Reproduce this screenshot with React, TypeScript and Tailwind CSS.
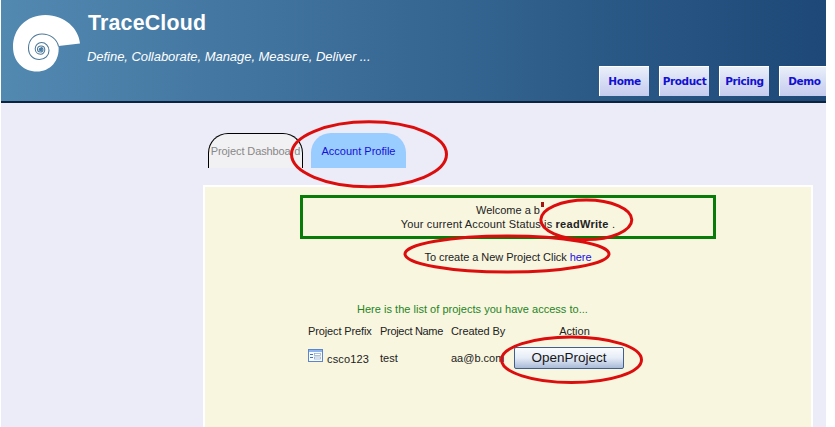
import React from "react";

function ShellLogo() {
  return (
    <svg width="72" height="62" viewBox="10 12 72 62" className="block" fill="none">
      <path
        d="M80 43.5C79 29 65 15 45.5 15C26 15 13 29 13 47C13 61 23 71.5 37 71.5C50 71.5 60 61 58.5 46Z"
        fill="#fff"
      />
      <path
        d="M58.5 46.5C57 39 50 34 42 34C34 34 28.5 40 28.5 48C28.5 55 33 59.5 39.5 59.5C45 59.5 49 55.5 49 50.5C49 46 45.5 42.5 41.5 42.5C38 42.5 35.2 45.5 35.2 48.8C35.2 52 37.5 54.2 40.5 54.2C43 54.2 44.8 52 44.8 49.8C44.8 47.5 43 46 41 46C39 46 37.5 47.5 37.5 49.3C37.5 51 39 52 40.5 52C42 52 43 51 43 49.7C43 48.5 42 47.6 40.9 47.6"
        stroke="#4b7798"
        strokeWidth="1.05"
      />
      <circle cx="40.6" cy="49.4" r="1.8" fill="#467fa9" />
    </svg>
  );
}

function NavButton({ children }: { children: React.ReactNode }) {
  return (
    <a className="flex h-[30px] w-[50px] shrink-0 items-center justify-center border-l border-t border-white bg-gradient-to-b from-[#e9eff9] to-[#c5cbee] pb-px font-['DejaVu_Sans',sans-serif] text-[10.5px] font-bold tracking-[-0.4px] text-[#1210d2]">
      {children}
    </a>
  );
}

function FormIcon() {
  return (
    <svg width="15" height="13" viewBox="0 0 15 13" className="block">
      <rect x=".5" y=".5" width="14" height="12" fill="#f7fbff" stroke="#5c86c5" />
      <rect x="1" y="1" width="13" height="2" fill="#8db4ee" />
      <path d="M2 5.5h3M2 8.5h3" stroke="#4474b4" />
      <rect x="6.5" y="4.5" width="6" height="2" fill="#fff" stroke="#8ba5c7" strokeWidth=".7" />
      <rect x="6.5" y="8" width="6" height="2" fill="#fff" stroke="#8ba5c7" strokeWidth=".7" />
    </svg>
  );
}

export default function App() {
  return (
    <div className="relative h-[427px] w-[835px] overflow-hidden bg-white pl-px font-['Liberation_Sans',Arial,sans-serif] text-[11px] leading-[14px] text-[#222]">
      <div className="h-full w-[825px] overflow-hidden bg-[#ecebf8]">
        <header className="flex h-[103px] border-b-2 border-[#0c2340] bg-gradient-to-r from-[#5289b1] to-[#1d4877] pl-[9px]">
          <div className="shrink-0 pt-3">
            <ShellLogo />
          </div>
          <div className="ml-[5px] w-[300px] shrink-0 whitespace-nowrap pt-[11px] text-white">
            <h1 className="pl-px text-[21.33px] font-bold leading-6 tracking-[0.2px]">TraceCloud</h1>
            <p className="mt-[14px] text-[13px] italic leading-4 tracking-[-0.04px]">
              Define, Collaborate, Manage, Measure, Deliver ...
            </p>
          </div>
          <nav className="ml-[212px] flex shrink-0 gap-[10px] pt-[66px]">
            <NavButton>Home</NavButton>
            <NavButton>Product</NavButton>
            <NavButton>Pricing</NavButton>
            <NavButton>Demo</NavButton>
          </nav>
        </header>

        <div className="ml-[207px] mt-[30px] flex gap-2 whitespace-nowrap">
          <div className="flex h-[35px] w-[95px] items-center justify-center rounded-t-[20px] border border-b-0 border-black bg-[#f1f1f3] tracking-[-0.1px] text-[#888]">
            Project Dashboard
          </div>
          <div className="flex h-[35px] w-[95px] items-center justify-center rounded-t-[20px] bg-[#99ccff] text-[#1710d5]">
            Account Profile
          </div>
        </div>

        <main className="ml-[202px] mt-[17px] h-[260px] w-[610px] border-2 border-white bg-[#f8f6df] pt-2">
          <div className="ml-[95px] h-[44px] w-[416px] border-[3px] border-[#087c08] pt-[5px] text-center">
            <p>Welcome a b</p>
            <p className="tracking-[0.15px]">
              Your current Account Status is <b className="tracking-[0.3px]">readWrite</b> .
            </p>
          </div>
          <p className="ml-[95px] mt-[11px] w-[416px] text-center tracking-[-0.05px]">
            To create a New Project Click <a className="text-[#1710e0]">here</a>
          </p>
          <p className="ml-[152px] mt-[38px] tracking-[0.02px] text-[#258425]">
            Here is the list of projects you have access to...
          </p>
          <div className="ml-[103px] mt-2 grid grid-cols-[72px_71px_63px_110px] whitespace-nowrap">
            <span className="tracking-[-0.12px]">Project Prefix</span>
            <span className="tracking-[-0.3px]">Project Name</span>
            <span className="tracking-[-0.1px]">Created By</span>
            <span className="pl-[11px] text-center">Action</span>
          </div>
          <div className="ml-[103px] mt-[9px] grid grid-cols-[72px_71px_63px_110px] whitespace-nowrap">
            <span className="flex gap-[4px] pt-[2px]">
              <FormIcon />
              <span className="pt-[3px] tracking-[0.15px]">csco123</span>
            </span>
            <span className="pt-[4px]">test</span>
            <span className="pt-[4px]">aa@b.com</span>
            <button className="flex h-[22px] w-[110px] items-center justify-center rounded-[2px] border border-[#425f8b] bg-gradient-to-b from-[#fafcff] via-[#e6ecf6] to-[#a9bbd8] text-[13.5px] text-[#161616]">
              OpenProject
            </button>
          </div>
        </main>
      </div>

      <svg width="835" height="427" className="pointer-events-none absolute left-0 top-0" fill="none" stroke="#dc0d0d" strokeWidth="3">
        <ellipse cx="369" cy="154.3" rx="77.5" ry="32.5" />
        <ellipse cx="586.3" cy="219.8" rx="45.5" ry="19.8" />
        <ellipse cx="507" cy="254" rx="102" ry="18" />
        <ellipse cx="571.5" cy="359.7" rx="70" ry="22.8" />
        <path d="M542.5 202v5" strokeWidth="3" stroke="#a51212" />
      </svg>
    </div>
  );
}
